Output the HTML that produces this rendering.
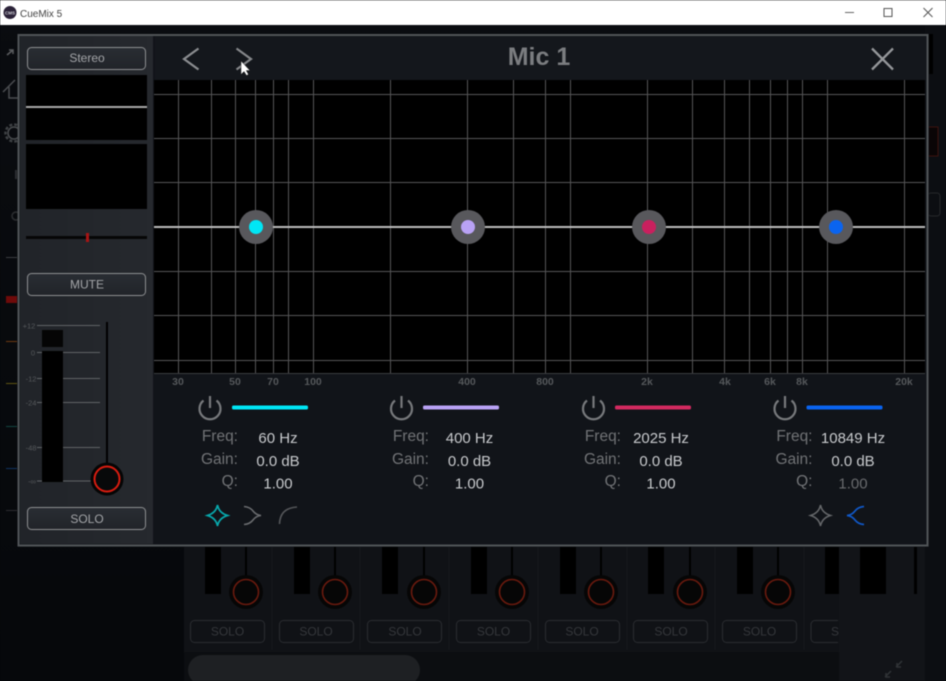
<!DOCTYPE html>
<html><head><meta charset="utf-8"><title>CueMix 5</title>
<style>
html,body{margin:0;padding:0;background:#05070a;width:946px;height:681px;overflow:hidden}
svg{display:block;filter:blur(.45px)}
text{font-family:"Liberation Sans",sans-serif}
</style></head><body>
<svg width="946" height="681" viewBox="0 0 946 681" xmlns="http://www.w3.org/2000/svg">
<defs>
<linearGradient id="bg" x1="0" y1="0" x2="0" y2="1"><stop offset="0" stop-color="#0a0c10"/><stop offset="1" stop-color="#06080b"/></linearGradient>
<linearGradient id="side" x1="0" y1="0" x2="1" y2="0"><stop offset="0" stop-color="#212429"/><stop offset="1" stop-color="#26292e"/></linearGradient>
<linearGradient id="btn" x1="0" y1="0" x2="0" y2="1"><stop offset="0" stop-color="#292d33"/><stop offset="1" stop-color="#212429"/></linearGradient>
</defs>
<rect width="946" height="681" fill="url(#bg)"/>
<!-- background app -->
<rect x="184" y="546" width="655" height="135" fill="#101216"/>
<rect x="839" y="546" width="107" height="135" fill="#121418"/>
<rect x="925" y="25" width="21" height="656" fill="#0c0e12"/>
<rect x="184" y="652" width="655" height="29" fill="#0c0e11"/>
<rect x="188" y="655" width="232" height="30" rx="15" fill="#1e2023"/>
<g stroke="#17191d" stroke-width="1">
<line x1="272" y1="546" x2="272" y2="650"/><line x1="360" y1="546" x2="360" y2="650"/><line x1="449" y1="546" x2="449" y2="650"/><line x1="538" y1="546" x2="538" y2="650"/><line x1="627" y1="546" x2="627" y2="650"/><line x1="715" y1="546" x2="715" y2="650"/><line x1="804" y1="546" x2="804" y2="650"/>
</g>
<g fill="#000">
<rect x="205" y="546" width="16" height="48"/><rect x="294" y="546" width="16" height="48"/><rect x="382" y="546" width="16" height="48"/><rect x="471" y="546" width="16" height="48"/><rect x="560" y="546" width="16" height="48"/><rect x="648" y="546" width="16" height="48"/><rect x="737" y="546" width="16" height="48"/><rect x="825" y="546" width="14" height="48"/><rect x="860" y="546" width="26" height="48"/><rect x="914" y="546" width="3" height="48"/>
</g>
<g stroke="#000" stroke-width="2">
<line x1="246" y1="546" x2="246" y2="580"/><line x1="335" y1="546" x2="335" y2="580"/><line x1="424" y1="546" x2="424" y2="580"/><line x1="512" y1="546" x2="512" y2="580"/><line x1="601" y1="546" x2="601" y2="580"/><line x1="690" y1="546" x2="690" y2="580"/><line x1="778" y1="546" x2="778" y2="580"/>
</g>
<g fill="#060606">
<circle cx="246" cy="592" r="17"/><circle cx="335" cy="592" r="17"/><circle cx="424" cy="592" r="17"/><circle cx="512" cy="592" r="17"/><circle cx="601" cy="592" r="17"/><circle cx="690" cy="592" r="17"/><circle cx="778" cy="592" r="17"/>
</g>
<g fill="none" stroke="#6a1a0e" stroke-width="1.600">
<circle cx="246" cy="592" r="12.500"/><circle cx="335" cy="592" r="12.500"/><circle cx="424" cy="592" r="12.500"/><circle cx="512" cy="592" r="12.500"/><circle cx="601" cy="592" r="12.500"/><circle cx="690" cy="592" r="12.500"/><circle cx="778" cy="592" r="12.500"/>
</g>
<g fill="none" stroke="#2a2c30" stroke-width="1">
<rect x="190.500" y="620.500" width="74" height="22" rx="4"/><rect x="279.500" y="620.500" width="74" height="22" rx="4"/><rect x="367.500" y="620.500" width="74" height="22" rx="4"/><rect x="456.500" y="620.500" width="74" height="22" rx="4"/><rect x="545.500" y="620.500" width="74" height="22" rx="4"/><rect x="633.500" y="620.500" width="74" height="22" rx="4"/><rect x="722.500" y="620.500" width="74" height="22" rx="4"/><path d="M838 620.500H815a4 4 0 0 0-4 4v14a4 4 0 0 0 4 4h23"/>
</g>
<g fill="#35373b" font-size="12" text-anchor="middle">
<text x="227.500" y="635.500">SOLO</text><text x="316" y="635.500">SOLO</text><text x="405" y="635.500">SOLO</text><text x="493.500" y="635.500">SOLO</text><text x="582" y="635.500">SOLO</text><text x="671" y="635.500">SOLO</text><text x="759.500" y="635.500">SOLO</text><text x="835" y="635.500">S</text>
</g>
<g stroke="#303336" stroke-width="1.500" fill="none"><path d="M885 677l6-6M890 677h-4v-4M902 661l-6 6M897 661v0M897 663v4h4"/></g>
<!-- left app residue -->
<path d="M3 92L15 80M9 87V98H18" stroke="#4a4d50" stroke-width="1.500" fill="none"/>
<circle cx="14" cy="133" r="6" fill="none" stroke="#4a4d50" stroke-width="1.500"/><circle cx="14" cy="133" r="8.500" fill="none" stroke="#3e4144" stroke-dasharray="3 2" stroke-width="2.500"/>
<circle cx="16" cy="216" r="4" fill="none" stroke="#2c2e31" stroke-width="1.500"/>
<path d="M7 55l6-5M9 50h4v4" stroke="#5a5c5f" stroke-width="1.500" fill="none"/>
<rect x="15" y="170" width="2" height="9" fill="#2c2e31"/>
<rect x="6" y="257" width="11" height="1" fill="#3c3e41"/>
<rect x="6" y="296" width="11" height="7" fill="#6e0a0a"/>
<rect x="6" y="341" width="11" height="1" fill="#6e3810"/>
<rect x="6" y="383" width="11" height="1" fill="#5e5412"/>
<rect x="6" y="426" width="11" height="1" fill="#124540"/>
<rect x="6" y="468" width="11" height="1" fill="#103260"/>
<rect x="6" y="510" width="11" height="1" fill="#2c2c30"/>
<rect x="928" y="127" width="10" height="29" fill="#0a0506" stroke="#3c120e" stroke-width="1"/>
<rect x="928" y="193" width="12" height="23" rx="3" fill="none" stroke="#25272a"/>
<rect x="928" y="34" width="5" height="40" fill="#000"/>
<!-- title bar -->
<rect width="946" height="25" fill="#fff"/>
<rect y="0" width="946" height="1" fill="#e6e6e6"/>
<circle cx="10" cy="12.500" r="6.500" fill="#2b2238"/>
<text x="10" y="14.300" font-size="4.500" fill="#cfcfd6" text-anchor="middle" font-weight="bold">CMS</text>
<text x="20" y="17" font-size="10" fill="#444">CueMix 5</text>
<rect x="845" y="12" width="9" height="1" fill="#666"/>
<rect x="884" y="8.500" width="8" height="8" fill="none" stroke="#555" stroke-width="1"/>
<path d="M923.500 8l9 9M932.500 8l-9 9" stroke="#555" stroke-width="1" fill="none"/>
<!-- panel -->
<rect x="18" y="34" width="911" height="513" fill="#111419"/>
<rect x="18.500" y="35" width="909" height="510.500" fill="none" stroke="#505457" stroke-width="2"/>
<rect x="20" y="36" width="133" height="508" fill="url(#side)"/>
<rect x="155" y="36" width="771" height="44" fill="#14171c"/>
<!-- left strip -->
<rect x="27.500" y="47.500" width="118" height="22" rx="4" fill="url(#btn)" stroke="#8e9092" stroke-width="1"/>
<text x="87" y="62" font-size="12" fill="#a3a5a8" text-anchor="middle">Stereo</text>
<rect x="26" y="75" width="121" height="65" fill="#000"/>
<rect x="26" y="106" width="121" height="2" fill="#a8a8a8"/>
<rect x="26" y="144" width="121" height="65" fill="#000"/>
<rect x="26" y="236" width="121" height="3" fill="#060606"/>
<rect x="86" y="233" width="3" height="9" fill="#a81414"/>
<rect x="27.500" y="273.500" width="118" height="22" rx="4" fill="url(#btn)" stroke="#8e9092" stroke-width="1"/>
<text x="87" y="288.500" font-size="12" fill="#a3a5a8" text-anchor="middle">MUTE</text>
<!-- meter -->
<g stroke="#606366" stroke-width="1">
<line x1="37" y1="325.500" x2="100" y2="325.500"/><line x1="37" y1="352.500" x2="100" y2="352.500"/><line x1="37" y1="378.500" x2="100" y2="378.500"/><line x1="37" y1="402.500" x2="100" y2="402.500"/><line x1="37" y1="447.500" x2="100" y2="447.500"/><line x1="37" y1="481" x2="92" y2="481"/>
</g>
<rect x="42" y="330" width="21" height="17" fill="#050505"/>
<rect x="42" y="351" width="21" height="131" fill="#000"/>
<g fill="#55585b" font-size="7.500" text-anchor="middle">
<text x="29" y="328.500">+12</text>
<text x="33" y="355.500">0</text>
<text x="31" y="381.500">-12</text>
<text x="31" y="405.500">-24</text>
<text x="31" y="450.500">-48</text>
<text x="32" y="484">-∞</text>
</g>
<rect x="106" y="322" width="2" height="146" fill="#000"/>
<circle cx="107" cy="479" r="16.500" fill="#050505"/>
<circle cx="107" cy="479" r="12.500" fill="#08090a" stroke="#d81c10" stroke-width="2"/>
<rect x="27.500" y="507.500" width="118" height="22" rx="4" fill="url(#btn)" stroke="#8e9092" stroke-width="1"/>
<text x="87" y="523" font-size="12" fill="#a3a5a8" text-anchor="middle">SOLO</text>
<!-- header -->
<path d="M198.500 48.500L184 59l14.500 10.500" fill="none" stroke="#8b8d90" stroke-width="2.200"/>
<path d="M236.500 48.500L251 59l-14.500 10.500" fill="none" stroke="#85878a" stroke-width="2.200"/>
<text x="539" y="65" font-size="25" font-weight="bold" fill="#7b7d80" text-anchor="middle">Mic 1</text>
<path d="M872 48.500l21 21M893 48.500l-21 21" stroke="#95979a" stroke-width="2.300" fill="none"/>
<!-- graph -->
<rect x="154" y="80" width="771" height="294" fill="#000"/>
<g stroke="#555557" stroke-width="1">
<path d="M154 94.500H925M154 138.500H925M154 182.500H925M154 271.500H925M154 315.500H925M154 360.500H925"/>
<path d="M178.500 80V374M211.500 80V374M235.500 80V374M255.500 80V374M273.500 80V374M288.500 80V374M313.500 80V374M390.500 80V374M467.500 80V374M513.500 80V374M545.500 80V374M570.500 80V374M647.500 80V374M692.500 80V374M724.500 80V374M749.500 80V374M770.500 80V374M787.500 80V374M802.500 80V374M827.500 80V374M904.500 80V374"/>
</g>
<rect x="154" y="373" width="771" height="1" fill="#3a3c3f"/>
<rect x="154" y="226" width="771" height="2" fill="#bcbcbc"/>
<g fill="#58585c">
<circle cx="256" cy="227" r="17"/><circle cx="468" cy="227" r="17"/><circle cx="649" cy="227" r="17"/><circle cx="836" cy="227" r="17"/>
</g>
<circle cx="256" cy="227" r="7" fill="#00e6f5"/>
<circle cx="468" cy="227" r="7" fill="#b9a2f5"/>
<circle cx="649" cy="227" r="7" fill="#c9205e"/>
<circle cx="836" cy="227" r="7" fill="#0a64f0"/>
<!-- axis labels -->
<g fill="#55585b" font-size="10.500" font-weight="bold" text-anchor="middle">
<text x="178" y="385">30</text><text x="235" y="385">50</text><text x="273" y="385">70</text><text x="313" y="385">100</text><text x="467" y="385">400</text><text x="545" y="385">800</text><text x="647" y="385">2k</text><text x="725" y="385">4k</text><text x="770" y="385">6k</text><text x="802" y="385">8k</text><text x="904" y="385">20k</text>
</g>
<!-- bands -->
<defs>
<g id="pw" fill="none" stroke="#77797c" stroke-width="2.200"><path d="M-6.500-7.500A10.500 10.500 0 1 0 6.500-7.500"/><path d="M0-12V0"/></g>
</defs>
<use href="#pw" x="210" y="408"/><use href="#pw" x="401.500" y="408"/><use href="#pw" x="593.500" y="408"/><use href="#pw" x="785" y="408"/>
<rect x="232" y="405.500" width="76" height="4" rx="1.500" fill="#00e6f5"/>
<rect x="423" y="405.500" width="76" height="4" rx="1.500" fill="#b9a2f5"/>
<rect x="615" y="405.500" width="76" height="4" rx="1.500" fill="#d32a60"/>
<rect x="806.500" y="405.500" width="76" height="4" rx="1.500" fill="#0a64f0"/>
<g font-size="15.500" fill="#717376" text-anchor="end">
<text x="238" y="441">Freq:</text><text x="238" y="464">Gain:</text><text x="238" y="486">Q:</text>
<text x="429" y="441">Freq:</text><text x="429" y="464">Gain:</text><text x="429" y="486">Q:</text>
<text x="621" y="441">Freq:</text><text x="621" y="464">Gain:</text><text x="621" y="486">Q:</text>
<text x="812.500" y="441">Freq:</text><text x="812.500" y="464">Gain:</text><text x="812.500" y="486">Q:</text>
</g>
<g font-size="15" fill="#c8cacd" text-anchor="middle">
<text x="278" y="443">60 Hz</text><text x="278" y="466">0.0 dB</text><text x="278" y="488.500">1.00</text>
<text x="469.500" y="443">400 Hz</text><text x="469.500" y="466">0.0 dB</text><text x="469.500" y="488.500">1.00</text>
<text x="661" y="443">2025 Hz</text><text x="661" y="466">0.0 dB</text><text x="661" y="488.500">1.00</text>
<text x="853" y="443">10849 Hz</text><text x="853" y="466">0.0 dB</text><text x="853" y="488.500" fill="#696b6e">1.00</text>
</g>
<!-- filter icons -->
<path d="M217.500 505Q219 513 227.500 515.500Q219 518 217.500 526Q216 518 207.500 515.500Q216 513 217.500 505Z" fill="none" stroke="#08a8ac" stroke-width="1.700"/>
<path d="M244 506.500Q250 507 253 511Q256 515 261 515.500Q256 516 253 520Q250 524 244 524.500" fill="none" stroke="#6a6c6f" stroke-width="1.600"/>
<path d="M279.500 524Q280 508 297 507" fill="none" stroke="#55575a" stroke-width="1.600"/>
<path d="M820.500 505Q822 513 830.500 515.500Q822 518 820.500 526Q819 518 810.500 515.500Q819 513 820.500 505Z" fill="none" stroke="#65676a" stroke-width="1.500"/>
<path d="M864 506.500Q858 507 855 511Q852 515 847 515.500Q852 516 855 520Q858 524 864 524.500" fill="none" stroke="#1058c8" stroke-width="1.700"/>
<!-- cursor -->
<path d="M241 61V74.500L244 71.500L246.500 75.500L248.500 74.500L246.300 70.500H250Z" fill="#fff" stroke="#222" stroke-width=".5"/>
</svg>
</body></html>
